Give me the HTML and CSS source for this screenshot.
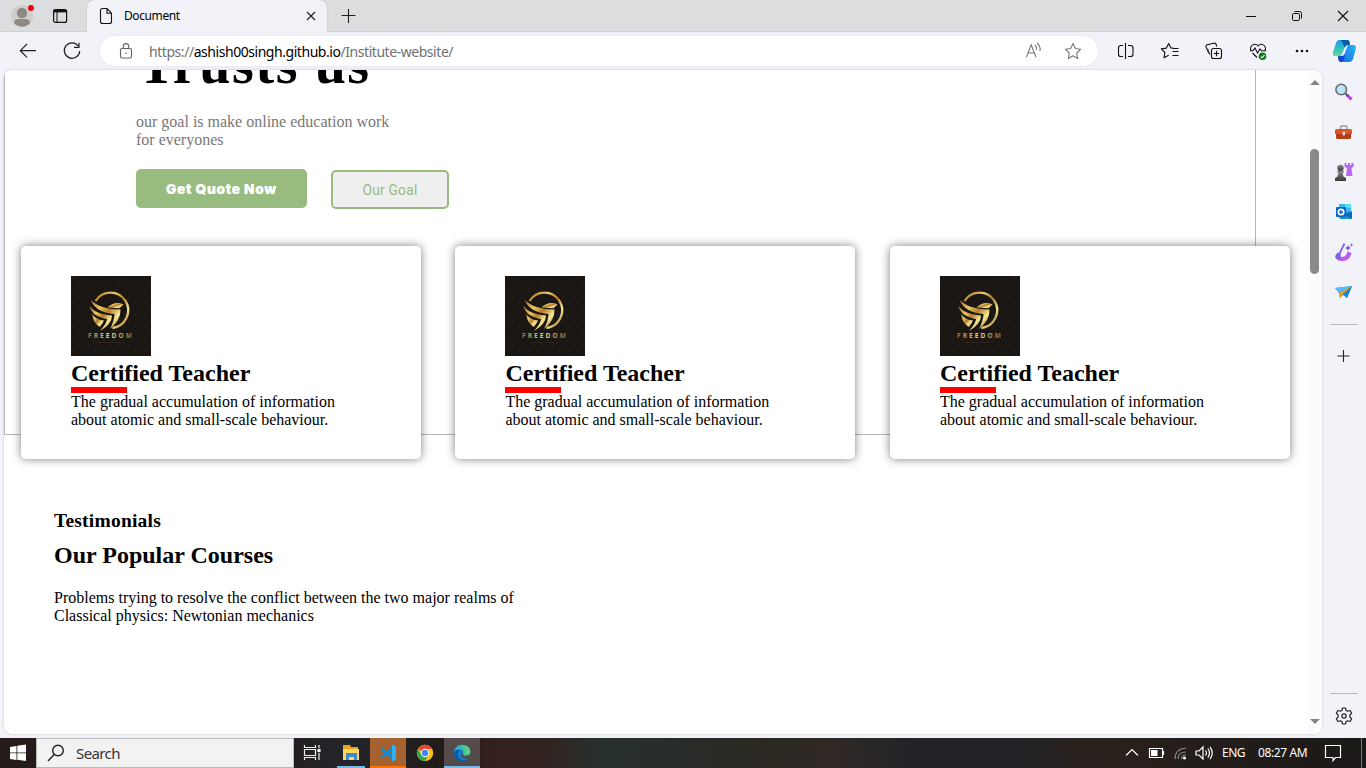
FILE: index.html
```html
<!DOCTYPE html>
<html lang="en">
<head>
<meta charset="utf-8">
<title>Document</title>
<link rel="stylesheet" href="styles.css">
</head>
<body>
<svg class="defs" aria-hidden="true">
  <defs>
    <linearGradient id="gold" x1="0" y1="0" x2="1" y2="1"><stop offset="0" stop-color="#a86f22"/><stop offset=".3" stop-color="#e9c767"/><stop offset=".5" stop-color="#b57d29"/><stop offset=".72" stop-color="#f7e794"/><stop offset="1" stop-color="#96601c"/></linearGradient>
    <linearGradient id="goldText"><stop offset="0" stop-color="#a06d2b"/><stop offset=".5" stop-color="#eddc8b"/><stop offset="1" stop-color="#8d5e25"/></linearGradient>
    <pattern id="flecks" width="10" height="12" patternUnits="userSpaceOnUse"><path d="M2 5l3-4M7 11l2-3" stroke="#2b2723" stroke-width=".7"/></pattern>
    <linearGradient id="copA" x1="0" y1="0" x2="0" y2="1"><stop offset="0" stop-color="#0f9fe8"/><stop offset="1" stop-color="#5fdc96"/></linearGradient>
    <linearGradient id="copB" x1="1" y1="0" x2="0" y2="1"><stop offset="0" stop-color="#29b3f5"/><stop offset="1" stop-color="#1769e8"/></linearGradient>
    <linearGradient id="violet" x1="0" y1="0" x2="1" y2="1"><stop offset="0" stop-color="#7a5be0"/><stop offset="1" stop-color="#e55af0"/></linearGradient>
    <linearGradient id="edgeA"><stop offset="0" stop-color="#1b9de2"/><stop offset="1" stop-color="#5fdd72"/></linearGradient>
    <linearGradient id="pawn" x1="0" y1="0" x2="0" y2="1"><stop offset="0" stop-color="#8c8c8c"/><stop offset="1" stop-color="#383838"/></linearGradient>
    <symbol id="logo" viewBox="0 0 80 80">
      <path fill="#191613" d="M0 0h80v80H0z"/><path fill="url(#flecks)" d="M0 0h80v80H0z"/>
      <path d="M24.500 25A17.700 17.700 0 1 1 41.500 52" fill="none" stroke="url(#gold)" stroke-width="2.300"/>
      <g fill="url(#gold)"><path d="M19.500 23.500C25 29.500 34 33.300 49.500 33.500Q50 44 39 53Q43.500 44 43.500 38C32 37 23 33 19.500 23.500z"/><path d="M36.500 31.500Q41 26.800 47 27Q51 26.800 52.500 28.500L48.500 32.200z"/><path d="M18.500 29.500C23 36.500 31 38.500 41 39.500Q41 48 29 55Q36 47 36 43C26 41.500 20 37 18.500 29.500z"/><path d="M21 37.500Q24 43.500 33 44.500Q32 47 29 51Q22 47 21 37.500z"/></g>
      <text class="logo-name" x="17" y="62" textLength="44">FREEDOM</text>
      <text class="logo-sub" x="24" y="67" textLength="29">YOUR COMPANY SLOGAN</text>
    </symbol>
  </defs>
</svg>

<div class="desktop">
  <header class="titlebar">
    <div class="profile"><svg width="24" height="24" viewBox="0 0 24 24"><circle cx="12" cy="12" r="11" fill="#d1cec9"/><circle cx="12" cy="9" r="5.200" fill="#8e8982"/><path d="M4 19.500q0-4.500 4.500-4.500h7q4.500 0 4.500 4.500-8 6.500-16 0z" fill="#8e8982"/></svg><i class="profile-dot"></i></div>
    <svg class="tabs-icon" width="16" height="16" viewBox="0 0 16 16" fill="none" stroke="#111" stroke-width="1.200"><rect x="1.600" y="1.600" width="13" height="12.800" rx="2"/><path d="M1.600 3h13" stroke-width="2.800"/><path d="M5 4v10.300" stroke-width="1"/></svg>
    <div class="tab">
      <svg width="14" height="18" viewBox="0 0 14 18" fill="none" stroke="#111" stroke-width="1.100"><path d="M3 1.500h5l4.500 4.700v8.300q0 2-2 2h-7q-2 0-2-2v-11q0-2 2-2M8 1.500v4.700h4.500"/></svg>
      <span class="tab-title">Document</span>
      <svg class="tab-close" width="10" height="10" viewBox="0 0 10 10" stroke="#222" stroke-width="1.200"><path d="M1 1l8 8M9 1l-8 8"/></svg>
    </div>
    <svg class="new-tab" width="16" height="16" viewBox="0 0 16 16" stroke="#222" stroke-width="1.100"><path d="M8.500 1v14M1.500 7.500h14"/></svg>
    <div class="window-controls">
      <svg width="46" height="32" viewBox="0 0 46 32"><path d="M18 16.500h10" stroke="#111"/></svg>
      <svg width="46" height="32" viewBox="0 0 46 32" fill="none" stroke="#111"><rect x="18.500" y="13.500" width="7" height="7" rx="1.300"/><path d="M20.500 11.500h5q2 0 2 2v5"/></svg>
      <svg width="46" height="32" viewBox="0 0 46 32" stroke="#111" stroke-width="1.100"><path d="M18 11l10 10M28 11L18 21"/></svg>
    </div>
  </header>

  <nav class="toolbar">
    <svg class="tool" viewBox="0 0 44 38" stroke="#222" stroke-width="1.200"><path d="M30 18.700H14.500M21 12l-6.700 6.700 6.700 6.700"/></svg>
    <svg class="tool" viewBox="0 0 44 38" stroke="#222" stroke-width="1.200"><path d="M28.200 14A7.700 7.700 0 1 0 29.700 19M29 10.800v4.500h-5"/></svg>
    <div class="address">
      <svg width="14" height="18" viewBox="0 0 14 18" fill="none" stroke="#666" stroke-width="1.100"><rect x="1.500" y="6.500" width="11" height="9.500" rx="1.500"/><path d="M4.300 6.500V4.300a2.700 2.700 0 0 1 5.400 0v2.200"/><circle cx="7" cy="11.300" r=".8" fill="#666" stroke="none"/></svg>
      <div class="url"><span>https://</span><span class="host">ashish00singh.github.io</span><span>/Institute-website/</span></div>
      <svg class="read-aloud" width="40" height="30" viewBox="0 0 40 30" fill="none" stroke="#777" stroke-width="1.100"><path d="M13.500 21l4.700-12.300 4.700 12.300M15 17h6.500M22 9q2 2 1.400 5M24 7q4 3.500 3 8"/></svg>
      <svg width="40" height="30" viewBox="0 0 40 30" fill="none" stroke="#777" stroke-width="1.100"><path d="M20 7.500l2.300 5 5.400.7-4 3.800 1 5.500-4.700-2.700-4.700 2.700 1-5.500-4-3.800 5.400-.7z" stroke-linejoin="round"/></svg>
    </div>
    <svg class="tool" viewBox="0 0 44 38" stroke="#111" stroke-width="1.100"><path d="M19 13.500h-2q-2.500 0-2.500 2.500v6.500q0 2 2.500 2H19M24 13.500h2.500q2.500 0 2.500 2.500v6.500q0 2-2.500 2H24M21.500 11v16"/></svg>
    <svg class="tool" viewBox="0 0 44 38" stroke="#111" stroke-width="1.100"><path d="M25.500 16.300l-2.600-.4-2.200-4.400-2.300 4.600-5.100.8 3.600 3.600-.9 5.300 4.700-2.600M25 16.500h5.500M24.500 19.500h6M24.500 23.500h6" stroke-linejoin="round"/></svg>
    <svg class="tool" viewBox="0 0 44 38" stroke="#111" stroke-width="1.100"><rect x="19.500" y="16.500" width="10" height="10" rx="2"/><path d="M24.500 18.800v5.400M21.800 21.500h5.400M18 22.500l-3.800-7q-.8-2 1-2.700l6.500-1.600q2-.5 2.500 1.300l.5 2M17 21q-1.500-1-1-4"/></svg>
    <svg class="tool" viewBox="0 0 44 38" stroke="#111" stroke-width="1.100"><path d="M14.800 18.500c-1.500-5.500 4.500-8 7.200-4.500 2.700-3.500 8.700-1 7.200 4.500M16.500 21l4.500 4.500M14 18.700h3l2-2.700 2.500 5 2.500-4 1.500 1.800H30"/><circle cx="26.500" cy="24.300" r="3.800" fill="#12751f" stroke="none"/><path d="M24.800 24.500l1.200 1.300 2.500-2.700" stroke="#fff"/></svg>
    <svg class="tool" viewBox="0 0 44 38"><g fill="#111"><circle cx="17" cy="19" r="1.300"/><circle cx="22" cy="19" r="1.300"/><circle cx="27" cy="19" r="1.300"/></g></svg>
    <svg class="copilot" width="26" height="26" viewBox="0 0 26 26"><path d="M8 2h8q3 0 2 3l-4 11q-1 2-4 2H4q-3 0-2-4L5 5q1-3 3-3z" fill="url(#copA)"/><path d="M10 2h6q3 0 3 5h-4l-1 3z" fill="#075dac"/><path d="M17 7h5q4 0 2.500 5L22 21q-1 3-4 3h-8q-2 0-3-6h4q2 0 3-4l2-6z" fill="url(#copB)"/><path d="M7 18h5l2-2-1 5q-1 3-3 3-3 0-3-6z" fill="#1645d1"/><path d="M14 9l3-2-4 10-3 1z" fill="#e7f9ff"/></svg>
  </nav>

  <div class="browser-body">
    <div class="viewport">
      <main class="page">
        <section class="hero">
          <h1>Trusts us</h1>
          <p>our goal is make online education work<br>for everyones</p>
          <div class="hero-actions"><button class="quote">Get Quote Now</button><button class="goal">Our Goal</button></div>
        </section>
        <section class="cards">
          <article class="card"><svg class="logo"><use href="#logo"/></svg><h2>Certified Teacher</h2><div class="rule"></div><p>The gradual accumulation of information about atomic and small-scale behaviour.</p></article>
          <article class="card"><svg class="logo"><use href="#logo"/></svg><h2>Certified Teacher</h2><div class="rule"></div><p>The gradual accumulation of information about atomic and small-scale behaviour.</p></article>
          <article class="card"><svg class="logo"><use href="#logo"/></svg><h2>Certified Teacher</h2><div class="rule"></div><p>The gradual accumulation of information about atomic and small-scale behaviour.</p></article>
        </section>
        <section class="courses">
          <h3>Testimonials</h3>
          <h2>Our Popular Courses</h2>
          <p>Problems trying to resolve the conflict between the two major realms of<br>Classical physics: Newtonian mechanics</p>
        </section>
      </main>
      <div class="scrollbar"><i class="arrow up"></i><i class="thumb"></i><i class="arrow down"></i></div>
    </div>
    <aside class="sidebar">
      <svg class="app" viewBox="0 0 20 20"><path d="M13 13l4.500 4.500" stroke="#b83df0" stroke-width="3"/><path d="M11 11l3 3" stroke="#555" stroke-width="2"/><circle cx="7.200" cy="7.500" r="5.300" fill="#b9e4fa" stroke="#6c6c6c" stroke-width="1.600"/></svg>
      <svg class="app" viewBox="0 0 20 20"><path d="M6.500 7V5.500Q6.500 4 8 4h3.500Q13 4 13 5.500V7" fill="none" stroke="#999" stroke-width="1.400"/><path d="M2.500 7h14q1.500 0 1.500 1.500V12H1V8.500Q1 7 2.500 7z" fill="#dd5524"/><path d="M2 12h15v3.500q0 1.500-2 1.500H4q-2 0-2-1.500z" fill="#b73c13"/><rect x="8.500" y="9.500" width="2.600" height="4" rx="1" fill="#ddd"/></svg>
      <svg class="app" viewBox="0 0 20 20"><path d="M10.500 1h2v2h1.500V1h2v2h1.500V1h2v4l-2 1 1 8h-6.500l1-8-2.500-1z" fill="#b968ee"/><circle cx="6.500" cy="6" r="3.200" fill="url(#pawn)"/><path d="M3 9h7v1.500H8.500l1 4 2.500 1.500v3H1v-3l2.500-1.500 1-4H3z" fill="url(#pawn)"/></svg>
      <svg class="app" viewBox="0 0 20 20"><path d="M5 2h12v8H5z" fill="#35b9ee"/><path d="M11 2h6v4h-6z" fill="#59d9fa"/><path d="M5 9l12 1 1 7H7q-2 0-2-2z" fill="#1591de"/><path d="M18 9v8l-7-4z" fill="#1169b2"/><rect x="2" y="5" width="10" height="10" rx="1" fill="#0869bd"/><circle cx="7" cy="10" r="2.700" fill="none" stroke="#fff" stroke-width="1.700"/></svg>
      <svg class="app" viewBox="0 0 20 20"><path d="M3.500 10.500q-4.500 6 2.500 8.500 10 1 11.500-8l-4-1.500q-1 5.500-6 5.500-2 0-.5-3z" fill="url(#violet)"/><path d="M4.500 13.500L10.500 1.500" stroke="#8467e8" stroke-width="1.800"/><circle cx="4" cy="14.500" r="2.700" fill="#8062dc"/><path d="M14 3l.8 1.800L17 6l-2.200 1L14 9l-1-2-2-1 2-1zM17.500 1l.5 1.500 1.500.5-1.500.5-.5 1.500-.5-1.500-1.500-.5 1.500-.5z" fill="#7d50dd"/></svg>
      <svg class="app" viewBox="0 0 20 20"><path d="M1 6l17-2-5 12-4-3-3 3-1-5z" fill="#2799ed"/><path d="M1 6l17-2L5 11z" fill="#55bcfa"/><path d="M5 11l13-7-10 9-2 3z" fill="#f39c12"/><path d="M9 12l9-8-5 12z" fill="#1685dc"/></svg>
      <i class="side-rule"></i>
      <svg class="side-plus" width="14" height="14" viewBox="0 0 14 14" stroke="#222" stroke-width="1.100"><path d="M6.500 1v12M.5 7h12"/></svg>
      <i class="side-rule bottom"></i>
      <svg class="gear" width="20" height="20" viewBox="0 0 20 20" fill="none" stroke="#222" stroke-width="1.200"><path d="M8.500 2h3l.6 2.500 1.500.8 2.500-.8 1.600 2.700-1.800 1.800v2l1.800 1.800-1.600 2.700-2.500-.8-1.500.8-.6 2.500h-3l-.6-2.500-1.500-.8-2.500.8-1.600-2.700L4.100 11V9L2.300 7.200l1.600-2.700 2.500.8 1.500-.8z" stroke-linejoin="round"/><circle cx="10" cy="10" r="2.200"/></svg>
    </aside>
  </div>

  <footer class="taskbar">
    <svg class="start" viewBox="0 0 36 30" fill="#fff"><path d="M10 8.900l6.500-1v6.500H10zM17.300 7.800L26 6.600v7.800h-8.700zM10 15.300h6.500v6.600l-6.500-.9zM17.300 15.300H26V23l-8.700-1.200z"/></svg>
    <div class="search"><svg width="20" height="20" viewBox="0 0 20 20" fill="none" stroke="#222" stroke-width="1.400"><circle cx="12" cy="7.500" r="5.300"/><path d="M8.200 11.500L2 18"/></svg><span>Search</span></div>
    <svg class="task wide" viewBox="0 0 38 30" fill="none" stroke="#eee" stroke-width="1.200"><path d="M10.500 7v2.500h11V7M10.500 22v-2.500h11V22M10.500 11.500h11v6h-11zM25 7v3M25 15v7"/><rect x="24" y="11.500" width="2" height="2" fill="#fff"/></svg>
    <div class="task wide running"><svg width="18" height="18" viewBox="0 0 18 18"><path d="M1 1h7l1 2h7v13H1z" fill="#e9a51e"/><path d="M1 5h16v11H1z" fill="#ffd65b"/><path d="M4 9h11v7h-3v-3H7v3H4z" fill="#398bd0"/></svg></div>
    <div class="task code"><svg width="18" height="18" viewBox="0 0 18 18"><path d="M13 .5l4 2v13l-4 2z" fill="#2bb0f4"/><path d="M13 3v4L3.500 14.300l-2-1.800zM1.500 5.500l2-1.800L13 11v4.500z" fill="#1688d2"/></svg></div>
    <div class="task wide"><svg width="18" height="18" viewBox="0 0 18 18"><circle cx="9" cy="9" r="8.200" fill="#fbc116"/><path d="M9 9L1.900 4.900A8.200 8.200 0 0 1 16.100 4.900H9z" fill="#e94335"/><path d="M1.900 4.900A8.200 8.200 0 0 0 9 17.200l3.500-6.200L5.500 11z" fill="#32a852"/><circle cx="9" cy="9" r="4.200" fill="#fff"/><circle cx="9" cy="9" r="3.200" fill="#4285f4"/></svg></div>
    <div class="task edge"><svg width="18" height="18" viewBox="0 0 18 18"><circle cx="9" cy="9" r="8.300" fill="#127fcd"/><path d="M1 8Q2 1 9 .7q8 .3 8.300 7-.3 4-5 4-3 0-2-2Q11 5.500 7 5.500 2 5.500 1 8z" fill="url(#edgeA)"/><path d="M7 6q-5 5 0 9 4 3 9-.5Q12 19 7 17 1 14 1 9q2-4 6-3z" fill="#0c59a4"/><path d="M10.300 9.700q-1 2 2 2 2 0 3.700-1v3q-4 2-7-.5-2.500-3 1.300-3.500z" fill="#544b4a"/></svg></div>
    <div class="tray">
      <svg viewBox="0 0 24 30"><path d="M6 17.500l6-6 6 6"/></svg>
      <svg viewBox="0 0 24 30"><path d="M5.500 10.500h13v9h-13zM19.500 13v4"/><path d="M7 12h6.500v6H7z" fill="#fff" stroke="none"/></svg>
      <svg viewBox="0 0 24 30"><g stroke="#888"><path d="M7 21q0-10 11-11M10 21q0-7 8-7M13.500 21q0-4 4.500-4"/></g><circle cx="16.500" cy="20" r="1.600" fill="#fff" stroke="none"/></svg>
      <svg viewBox="0 0 24 30"><path d="M4 13h3l4-4v12l-4-4H4zM13.500 12.500q2 2.500 0 5M15.800 10.500q3.300 4.500 0 9M18 8.800q4.500 6.200 0 12.400"/></svg>
      <span class="lang">ENG</span><span class="clock">08:27 AM</span>
      <svg class="notice" viewBox="0 0 24 30"><path d="M4.500 7.500h15v12h-5l-2.500 3v-3H4.500z"/></svg>
      <i class="peek"></i>
    </div>
  </footer>
</div>
</body>
</html>
```
FILE: styles.css
```css
* { box-sizing: border-box; }
body { margin: 0; overflow: hidden; font-family: "Liberation Serif", "Times New Roman", serif; color: #000; }
svg { display: block; flex: none; }
h1, h2, h3, p { margin: 0; }
.defs { position: absolute; width: 0; height: 0; }
.desktop { display: flex; flex-direction: column; width: 1366px; height: 768px; background: #f2f3f8; }

.titlebar { display: flex; height: 32px; background: #dcddde; box-shadow: inset 0 -1px #d0d1d4; }
.profile { position: relative; margin: 4px 0 0 10px; width: 24px; height: 24px; }
.profile-dot { position: absolute; left: 18px; top: 1px; width: 6px; height: 6px; border-radius: 50%; background: #e60012; }
.tabs-icon { margin: 8px 0 0 18px; }
.tab { display: flex; align-items: center; width: 240px; height: 32px; margin-left: 19px; padding: 0 11px 0 12px; border-radius: 8px 8px 0 0; background: #f2f3f8; box-shadow: 0 0 2px #b9babd; clip-path: inset(0 -3px); font-family: "Noto Sans", sans-serif; }
.tab-title { margin-left: 11px; padding-bottom: 1px; font-size: 12px; letter-spacing: -.4px; }
.tab-close { margin-left: auto; }
.new-tab { margin: 8px 0 0 13px; }
.window-controls { display: flex; margin-left: auto; }

.toolbar { display: flex; height: 38px; padding-left: 6px; }
.tool { width: 44px; height: 38px; fill: none; }
.address { display: flex; align-items: center; width: 998px; height: 30px; margin: 4px 6px 0; padding: 0 5px 0 19px; border-radius: 15px; background: #fff; box-shadow: 0 0 3px #e2e3e8; font-family: "Noto Sans", sans-serif; }
.url { display: flex; margin-left: 16px; font-size: 14px; letter-spacing: -.45px; color: #717171; white-space: nowrap; }
.host { color: #000; }
.read-aloud { margin-left: auto; }
.copilot { margin: 6px 0 0 7px; }

.browser-body { display: flex; height: 668px; padding-left: 4px; }
.viewport { display: flex; width: 1318px; height: 664px; border-radius: 8px; background: #fff; box-shadow: 0 0 2px #b5b6c2; overflow: hidden; }
.page { width: 1303px; }
.hero { width: 1252px; height: 366px; padding-left: 132px; border: solid #b6b6b6; border-width: 0 1px 1px 0; box-shadow: inset 1px 0 #b6b6b6; }
.hero h1 { height: 44px; padding-left: 2px; margin-top: -1px; font-size: 56px; line-height: 60px; letter-spacing: 1.6px; transform: translateY(-35px); white-space: nowrap; }
.hero p { font-size: 16px; line-height: 18px; color: #777; }
.hero-actions { display: flex; gap: 24px; margin-top: 20px; }
.hero button { height: 39px; padding: 0; border-radius: 5px; }
.quote { width: 171px; border: 0; background: #98bb7f; color: #fff; font: 900 13.6px Inter, "Liberation Sans", sans-serif; letter-spacing: .7px; -webkit-text-stroke: .2px #fff; }
.goal { width: 118px; margin-top: 1px; border: 2px solid #98bb7f; background: #efefef; color: #98bb7f; font: 13.8px Roboto, sans-serif; letter-spacing: .2px; }

.cards { display: grid; grid-template-columns: 434.4px 434.6px 400px; margin: -189px 0 0 17px; }
.card { width: 400px; height: 213px; padding: 30px 50px; border-radius: 5px; background: #fff; box-shadow: 0 0 10px rgba(0, 0, 0, .5); }
.logo { width: 80px; height: 80px; }
.logo-name { font: 700 6.6px "Open Sans", sans-serif; fill: url(#goldText); }
.logo-sub { font: 2.5px "Liberation Sans", sans-serif; fill: #574329; }
.card h2 { height: 31px; font-size: 24px; line-height: 34px; white-space: nowrap; }
.rule { width: 56px; height: 6px; background: #f00; }
.card p { width: 290px; font-size: 16px; line-height: 18px; }

.courses { padding: 51px 0 0 50px; }
.courses h3 { font-size: 19.5px; line-height: 22px; letter-spacing: .22px; }
.courses h2 { margin-top: 9px; font-size: 24px; line-height: 28px; }
.courses p { margin-top: 20px; font-size: 16px; line-height: 18px; }

.scrollbar { display: flex; flex-direction: column; align-items: center; width: 15px; height: 664px; padding: 10px 0; background: #fcfcfc; }
.arrow { border: solid transparent; border-width: 0 5px; }
.up { border-bottom: 5px solid #858585; }
.down { margin-top: auto; border-top: 5px solid #858585; }
.thumb { width: 9px; height: 125px; margin-top: 64px; border-radius: 5px; background: #8a8a8a; }

.sidebar { display: flex; flex-direction: column; align-items: center; width: 44px; height: 668px; padding-top: 12px; }
.app { width: 20px; height: 20px; margin-bottom: 20px; }
.side-rule { width: 28px; height: 1px; margin-top: 2px; background: #b9bac0; }
.side-plus { margin-top: 24px; }
.bottom { margin-top: 330px; }
.gear { margin-top: 12px; }

.taskbar { display: flex; height: 30px; background: linear-gradient(90deg, #241b1a 0, #241c1c 20%, #24252a 25%, #211c1a 32%, #351f1b 36%, #30231f 40%, #28312f 44%, #272d2b 49%, #2b2821 56%, #302826 61%, #212328 67%, #212328 73%, #29211c 80%, #1b1918 100%); }
.start { width: 36px; height: 30px; }
.search { display: flex; align-items: center; width: 258px; height: 30px; padding-left: 9px; border: 1px solid #b9b9b9; background: #f2f2f2; color: #333; font: 15px "Noto Sans", sans-serif; }
.search span { margin-left: 10px; letter-spacing: -.6px; }
.task { display: flex; align-items: center; justify-content: center; width: 36px; height: 30px; }
.wide { width: 38px; }
.running { background: linear-gradient(#76b9ed, #76b9ed) 5px 28px / 28px 2px no-repeat; }
.code { background: #a66130; box-shadow: inset 0 -2px #ff7500; }
.edge { background: #544b4a; box-shadow: inset 0 -2px #76b9ed; }
.tray { display: flex; align-items: center; margin-left: auto; color: #fff; font: 12px "Noto Sans", sans-serif; }
.tray svg { width: 24px; height: 30px; fill: none; stroke: #fff; stroke-width: 1.2; }
.lang, .clock { padding-bottom: 1px; }
.lang { width: 30px; margin-left: 6px; letter-spacing: -.5px; }
.clock { width: 50px; margin-left: 6px; letter-spacing: -.4px; white-space: nowrap; }
.tray .notice { margin-left: 13px; }
.peek { width: 1px; height: 30px; margin: 0 4px 0 16px; background: #777; }
```
